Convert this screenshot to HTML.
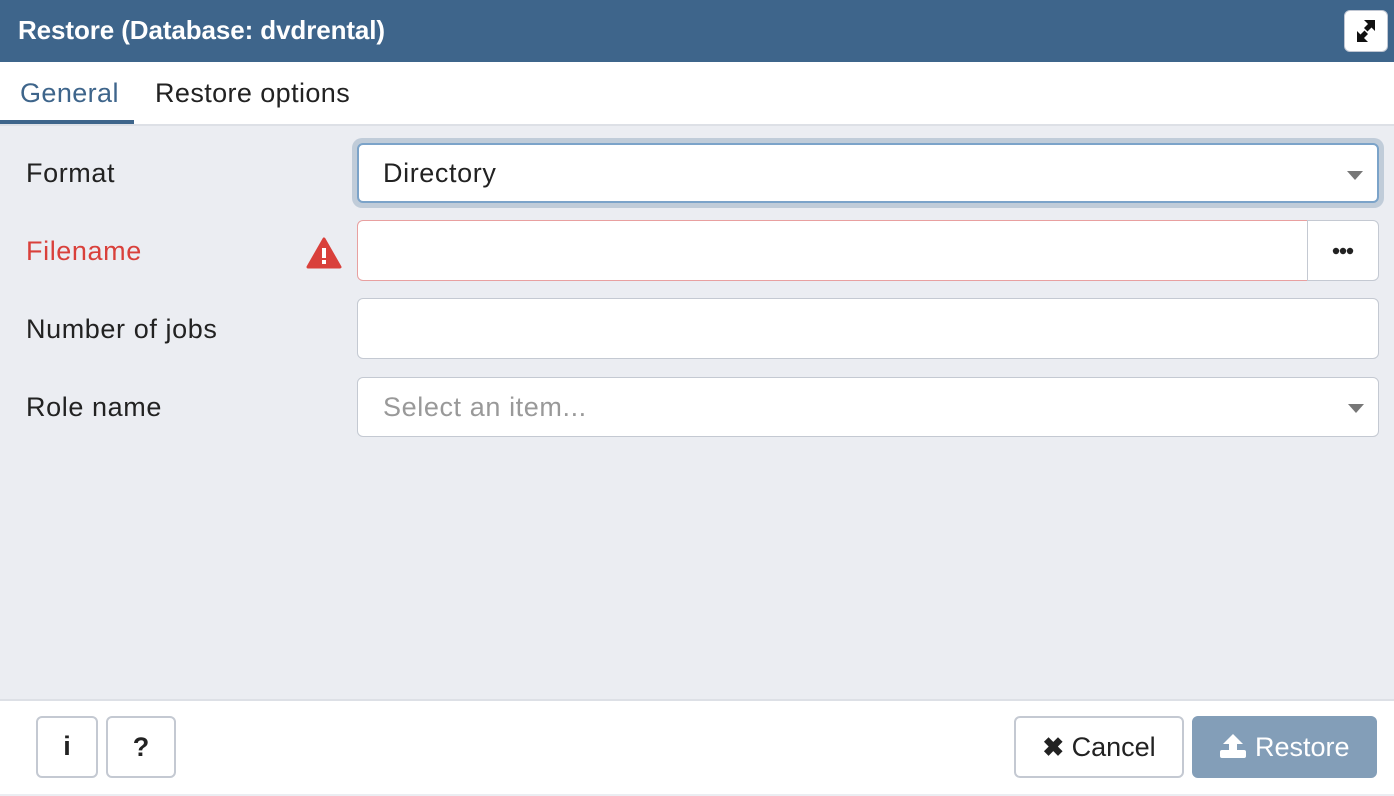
<!DOCTYPE html>
<html><head><style>
*{box-sizing:border-box;margin:0;padding:0}
body{width:1394px;height:796px;overflow:hidden;background:#ebedf2;font-family:"Liberation Sans",sans-serif;position:relative}
.hdr{position:absolute;left:0;top:0;width:1394px;height:62px;background:#3e658b;color:#fff;font-size:26px;font-weight:bold;padding:15px 18px;letter-spacing:-0.1px}
.max{position:absolute;left:1344px;top:10px;width:44px;height:42px;background:#fff;border:1px solid #c0c6d2;border-radius:6px}
.tabs{position:absolute;left:0;top:62px;width:1394px;height:64px;background:#fff;border-bottom:2px solid #dde0e6}
.tab{position:absolute;top:16px;font-size:27px;color:#222;letter-spacing:0.4px}
.ul{position:absolute;left:0;top:58px;width:134px;height:4px;background:#3e658b}
.lbl{position:absolute;left:26px;font-size:27px;color:#222;letter-spacing:0.6px}
.box{position:absolute;background:#fff;border:1px solid #c4c9d2;border-radius:6px;font-size:27px;color:#222;padding:14px 25px;letter-spacing:0.6px}
.caret{position:absolute;right:14px;top:26px;border-left:8px solid transparent;border-right:8px solid transparent;border-top:9px solid #777}
.ftr{position:absolute;left:0;top:699px;width:1394px;height:95px;background:#fff;border-top:2px solid #dde0e6}
.btn{position:absolute;background:#fff;border:2px solid #c4c9d2;border-radius:6px;font-size:27px;color:#222;text-align:center}
</style></head><body>
<div class="hdr">Restore (Database: dvdrental)</div>
<div class="max"><svg width="42" height="40" viewBox="0 0 42 40"><g fill="#111"><path d="M19 9h11v11l-3.5-3.5-4 4-3.5-3.5 4-4z"/><path d="M23 31H12V20l3.5 3.5 4-4 3.5 3.5-4 4z"/></g></svg></div>
<div class="tabs"><div class="tab" style="left:20px;color:#3e658b">General</div><div class="tab" style="left:155px">Restore options</div><div class="ul"></div></div>

<div class="lbl" style="top:158px">Format</div>
<div style="position:absolute;left:352px;top:138px;width:1032px;height:70px;border-radius:10px;background:#c0ccd9"></div>
<div class="box" style="left:357px;top:143px;width:1022px;height:60px;border:2px solid #7ba3c9;padding:13px 24px">Directory<div class="caret"></div></div>

<div class="lbl" style="top:236px;color:#d9403b">Filename</div>
<svg style="position:absolute;left:306px;top:237px" width="36" height="32" viewBox="0 0 36 32"><path d="M18 2 L34 30 H2 Z" fill="#d9403b" stroke="#d9403b" stroke-width="3" stroke-linejoin="round"/><rect x="16" y="11" width="4" height="10" fill="#fff"/><rect x="16" y="23" width="4" height="4" fill="#fff"/></svg>
<div class="box" style="left:357px;top:220px;width:951px;height:61px;border-color:#e8a0a0;border-radius:6px 0 0 6px"></div>
<div class="box" style="left:1307px;top:220px;width:72px;height:61px;border-radius:0 6px 6px 0;text-align:center;padding:0"><svg width="24" height="10" style="margin-top:25px"><circle cx="5" cy="5" r="3.2" fill="#222"/><circle cx="12" cy="5" r="3.2" fill="#222"/><circle cx="19" cy="5" r="3.2" fill="#222"/></svg></div>

<div class="lbl" style="top:314px">Number of jobs</div>
<div class="box" style="left:357px;top:298px;width:1022px;height:61px"></div>

<div class="lbl" style="top:392px">Role name</div>
<div class="box" style="left:357px;top:377px;width:1022px;height:60px;color:#999">Select an item...<div class="caret"></div></div>

<div class="ftr"></div>
<div class="btn" style="left:36px;top:716px;width:62px;height:62px;font-weight:bold;padding-top:13px">i</div>
<div class="btn" style="left:106px;top:716px;width:70px;height:62px;font-weight:bold;padding-top:14px">?</div>
<div class="btn" style="left:1014px;top:716px;width:170px;height:62px;padding-top:14px"><b style="font-size:26px">✖</b> Cancel</div>
<div class="btn" style="left:1192px;top:716px;width:185px;height:62px;background:#839eb8;border-color:#839eb8;color:#fff;padding-top:14px"><svg width="28" height="26" viewBox="0 0 28 26" style="vertical-align:-3px"><path d="M14 1 L24 11 H18 V18 H10 V11 H4 Z" fill="#fff"/><rect x="1" y="17" width="26" height="8" rx="2" fill="#fff"/></svg> Restore</div>
</body></html>
